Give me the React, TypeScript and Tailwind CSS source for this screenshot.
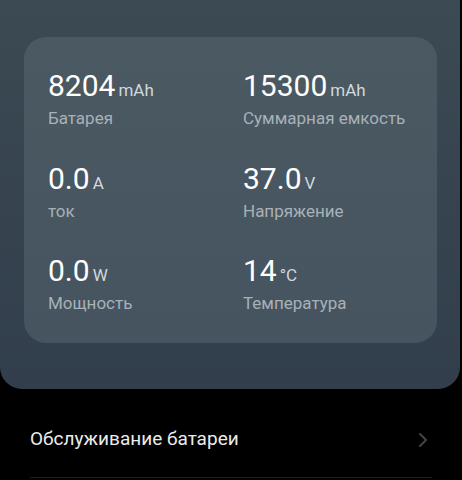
import { ChevronRight } from 'lucide-react';

type Stat = { value: string; unit: string; label: string };

const stats: Stat[] = [
  { value: '8204', unit: 'mAh', label: 'Батарея' },
  { value: '15300', unit: 'mAh', label: 'Суммарная емкость' },
  { value: '0.0', unit: 'A', label: 'ток' },
  { value: '37.0', unit: 'V', label: 'Напряжение' },
  { value: '0.0', unit: 'W', label: 'Мощность' },
  { value: '14', unit: '°C', label: 'Температура' },
];

export default function App() {
  return (
    <div
      className="w-[462px] h-[480px] overflow-hidden bg-black"
      style={{ fontFamily: 'Roboto, "Noto Sans", sans-serif' }}
    >
      {/* Battery info panel */}
      <div className="w-[460px] h-[389px] rounded-b-[22px] bg-gradient-to-b from-[#3c4a53] to-[#323e4c] pt-[37px] pl-[24px]">
        <div className="w-[413px] h-[306px] rounded-[22px] bg-gradient-to-b from-[#4b5962] to-[#465460] pt-[31px] pl-[24px] grid grid-cols-[195px_1fr] auto-rows-[92.5px]">
          {stats.map((s) => (
            <div key={s.label} className="flex flex-col">
              <div className="flex items-baseline gap-[3px] text-white">
                <span className="text-[30px] leading-[36px]">{s.value}</span>
                <span className="text-[17px] text-[#d2d8dc]">{s.unit}</span>
              </div>
              <span className="text-[17px] leading-[22px] mt-[3px] text-[#a8b1b8]">{s.label}</span>
            </div>
          ))}
        </div>
      </div>

      {/* List row */}
      <div className="mx-[30px] mt-[13px] flex items-center justify-between h-[76px] border-b border-[#1e1e1e]">
        <span className="text-[19px] text-[#ececec]">Обслуживание батареи</span>
        <svg width="10" height="16" viewBox="0 0 10 16" className="mr-[4px]" fill="none">
          <path d="M2 2 L8 8 L2 14" stroke="#444" strokeWidth="2" strokeLinecap="round" strokeLinejoin="round" />
        </svg>
      </div>
    </div>
  );
}
